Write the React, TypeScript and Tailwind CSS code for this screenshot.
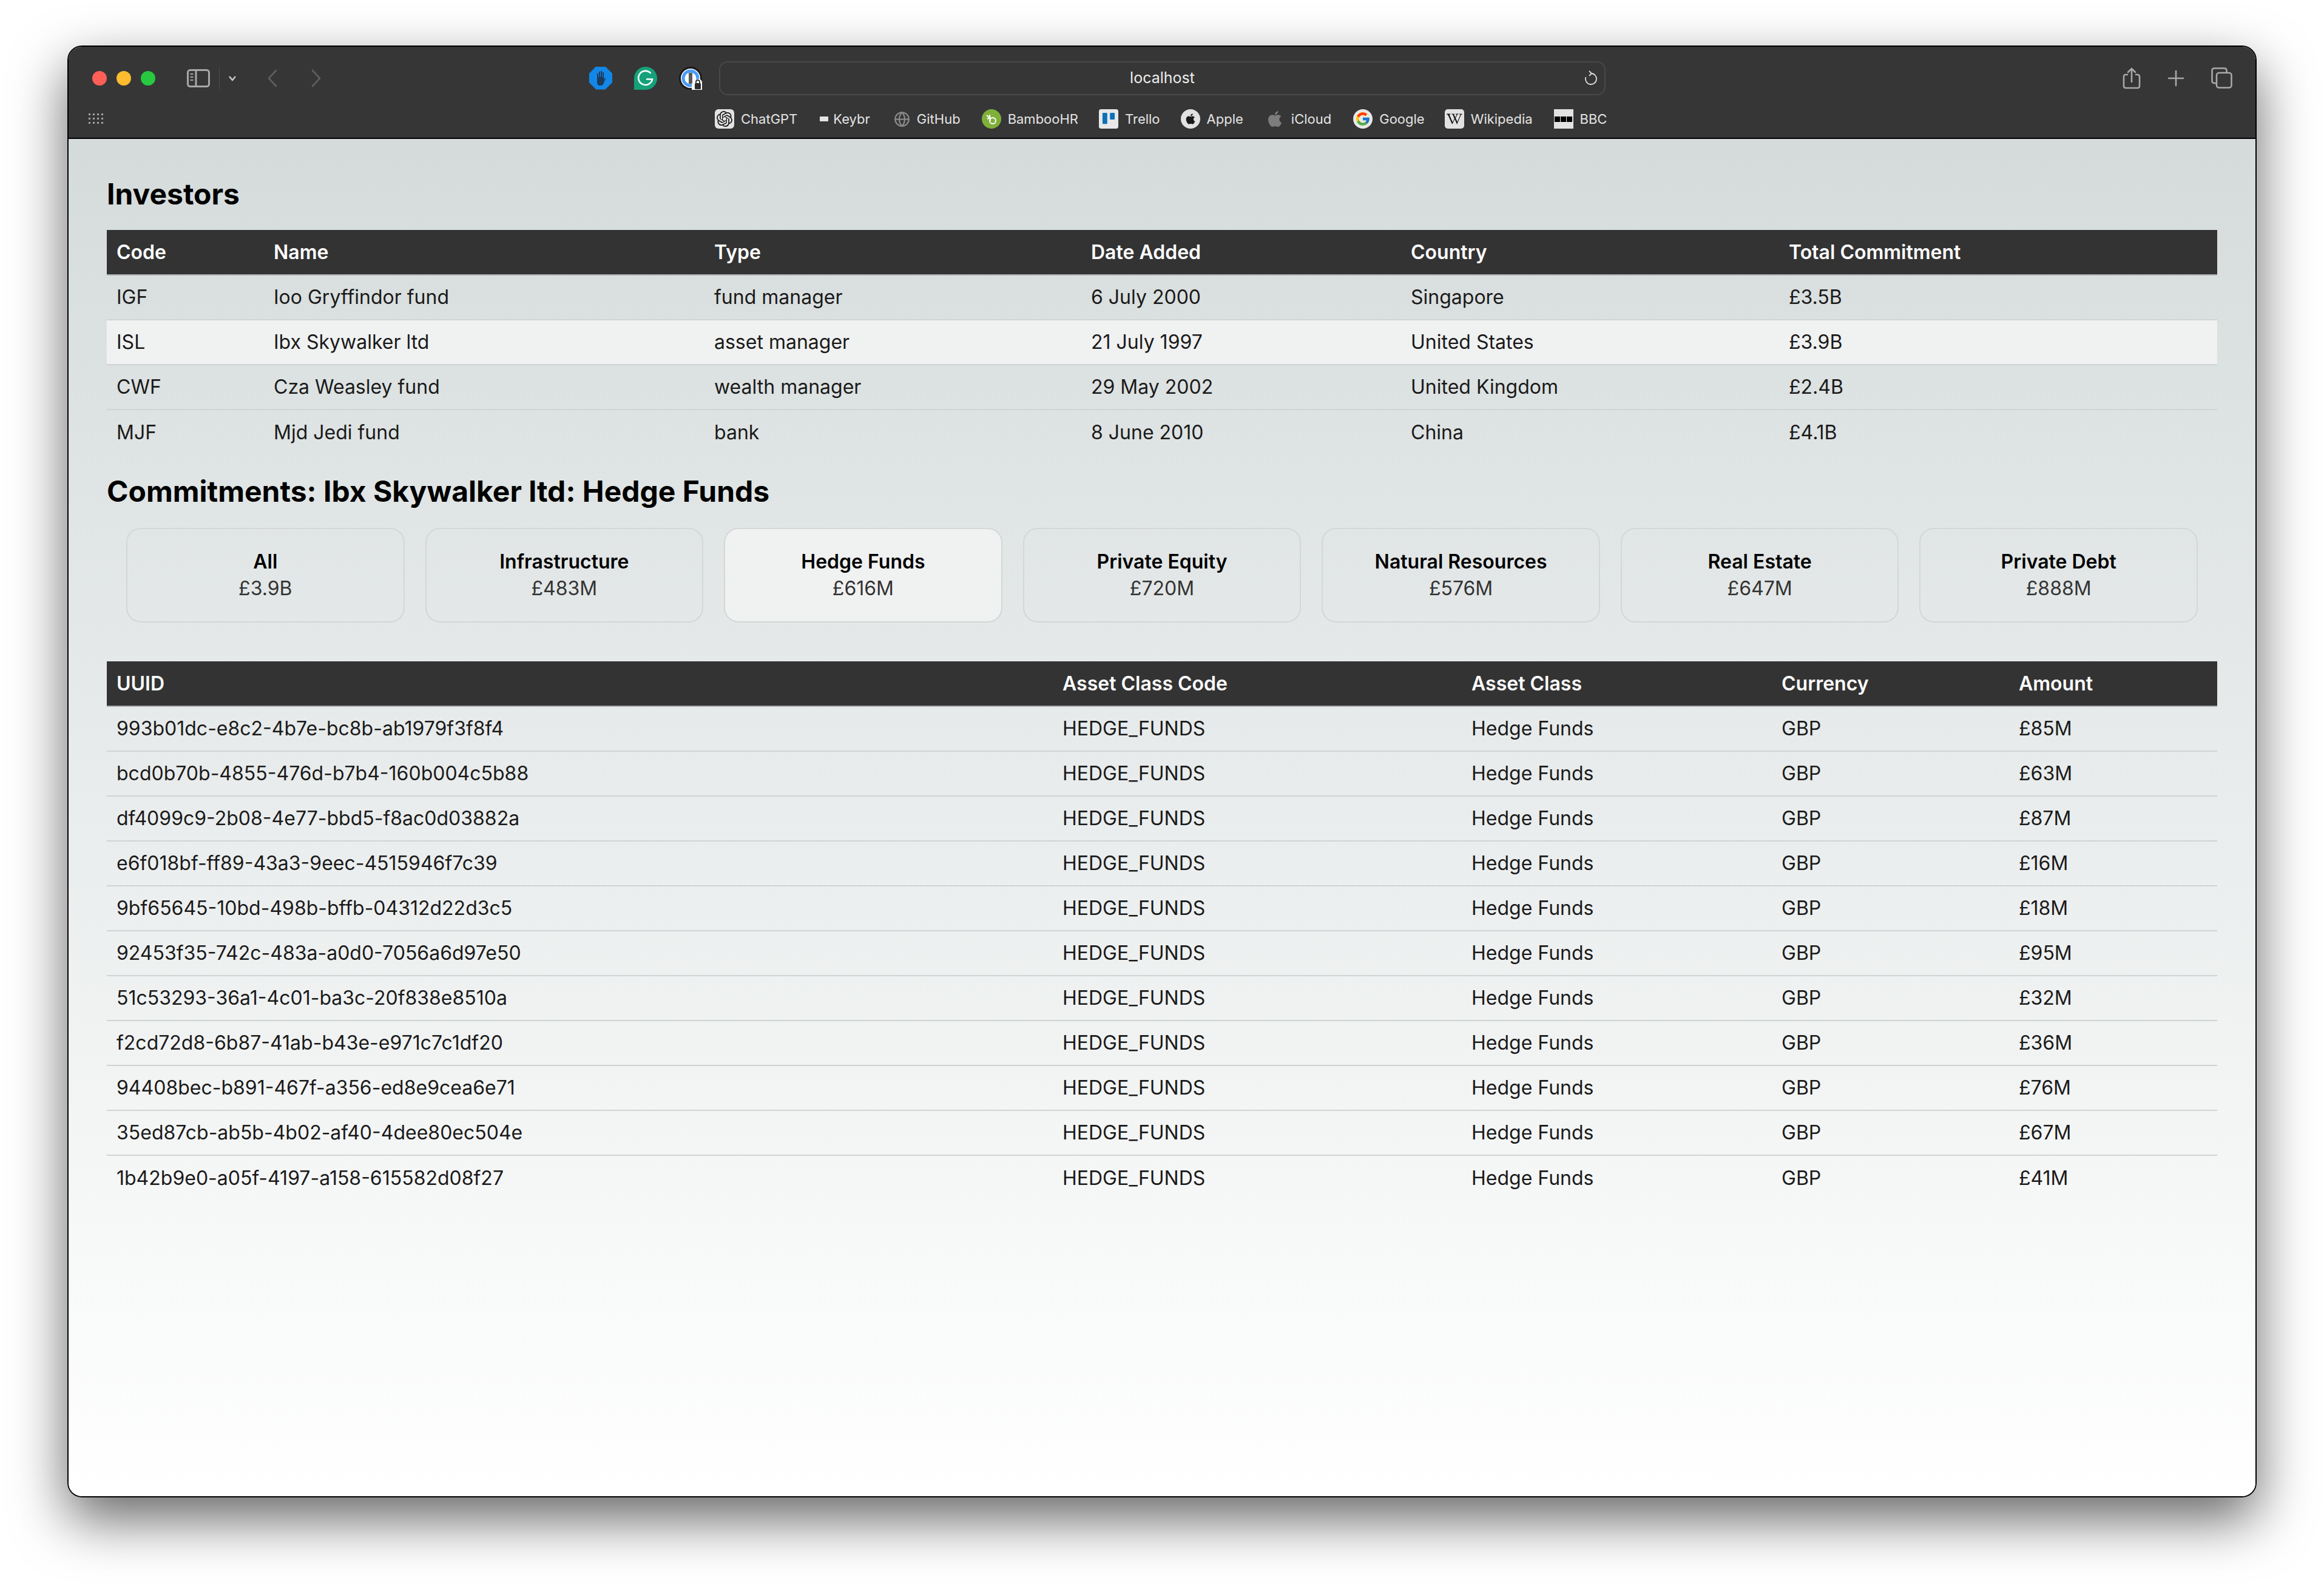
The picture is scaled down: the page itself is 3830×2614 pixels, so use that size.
import React from 'react'
import { FaApple, FaWikipediaW } from 'react-icons/fa'
import { FcGoogle } from 'react-icons/fc'
import { SiOpenai, SiTrello } from 'react-icons/si'
import { LuGlobe } from 'react-icons/lu'

const investors = [
  ['IGF', 'Ioo Gryffindor fund', 'fund manager', '6 July 2000', 'Singapore', '£3.5B'],
  ['ISL', 'Ibx Skywalker ltd', 'asset manager', '21 July 1997', 'United States', '£3.9B'],
  ['CWF', 'Cza Weasley fund', 'wealth manager', '29 May 2002', 'United Kingdom', '£2.4B'],
  ['MJF', 'Mjd Jedi fund', 'bank', '8 June 2010', 'China', '£4.1B'],
]

const tabs = [
  ['All', '£3.9B'],
  ['Infrastructure', '£483M'],
  ['Hedge Funds', '£616M'],
  ['Private Equity', '£720M'],
  ['Natural Resources', '£576M'],
  ['Real Estate', '£647M'],
  ['Private Debt', '£888M'],
]

const commitments = [
  ['993b01dc-e8c2-4b7e-bc8b-ab1979f3f8f4', '£85M'],
  ['bcd0b70b-4855-476d-b7b4-160b004c5b88', '£63M'],
  ['df4099c9-2b08-4e77-bbd5-f8ac0d03882a', '£87M'],
  ['e6f018bf-ff89-43a3-9eec-4515946f7c39', '£16M'],
  ['9bf65645-10bd-498b-bffb-04312d22d3c5', '£18M'],
  ['92453f35-742c-483a-a0d0-7056a6d97e50', '£95M'],
  ['51c53293-36a1-4c01-ba3c-20f838e8510a', '£32M'],
  ['f2cd72d8-6b87-41ab-b43e-e971c7c1df20', '£36M'],
  ['94408bec-b891-467f-a356-ed8e9cea6e71', '£76M'],
  ['35ed87cb-ab5b-4b02-af40-4dee80ec504e', '£67M'],
  ['1b42b9e0-a05f-4197-a158-615582d08f27', '£41M'],
]

const Bookmark = ({ icon, label }: { icon: React.ReactNode; label: string }) => (
  <div className="flex items-center gap-[11px]">
    {icon}
    <span className="text-[22px] leading-[32px] text-[#e4e4e4]">{label}</span>
  </div>
)

const Toolbar = () => (
  <div className="h-[152px] shrink-0 border-b-2 border-black bg-[#363636]">
    <div className="flex h-[84px] items-center pt-[19px]">
      <div className="ml-[39px] flex gap-[16px]">
        <div className="size-[24px] rounded-full bg-[#ff5f57]" />
        <div className="size-[24px] rounded-full bg-[#febc2e]" />
        <div className="size-[24px] rounded-full bg-[#28c840]" />
      </div>
      <svg className="ml-[52px]" width="38" height="30" viewBox="0 0 38 30" fill="none" stroke="#a8a8a8" strokeWidth="3">
        <rect x="1.5" y="1.5" width="35" height="27" rx="4" />
        <path d="M15 2v26" />
        <path d="M5.500 8h5M5.500 13h5M5.500 18h5" strokeWidth="2" />
      </svg>
      <div className="ml-[15px] h-[36px] w-px bg-[#4c4c4c]" />
      <svg className="ml-[14px]" width="14" height="10" viewBox="0 0 14 10" fill="none" stroke="#c4c4c4" strokeWidth="2.6">
        <path d="M2 2l5 6 5-6" />
      </svg>
      <svg className="ml-[50px]" width="18" height="30" viewBox="0 0 18 30" fill="none" stroke="#5f5f5f" strokeWidth="2.6" strokeLinecap="round">
        <path d="M15 2L3 15l12 13" />
      </svg>
      <svg className="ml-[54px]" width="18" height="30" viewBox="0 0 18 30" fill="none" stroke="#5f5f5f" strokeWidth="2.6" strokeLinecap="round">
        <path d="M3 2l12 13L3 28" />
      </svg>

      {/* extensions */}
      <div className="ml-[441px] flex size-[38px] items-center justify-center bg-[#1287e8] [clip-path:polygon(30%_0,70%_0,100%_30%,100%_70%,70%_100%,30%_100%,0_70%,0_30%)]">
        <svg width="20" height="28" viewBox="0 0 20 28" fill="#1d3a5c">
          <path d="M4 13V6h2v6h1V3h2v9h1V2h2v10h1V4h2v12l2-3 1 1-3 8c-1 3-3 4-6 4s-5-2-5-5z" />
        </svg>
      </div>
      <div className="ml-[36px]">
        <svg className="block" width="38" height="38" viewBox="0 0 38 38">
          <path d="M19 0a19 19 0 0 1 0 38H0V19A19 19 0 0 1 19 0z" fill="#15a27a" />
          <path d="M27.500 11a11.500 11.500 0 1 0 2.500 9.500H20" fill="none" stroke="#fff" strokeWidth="2.6" />
        </svg>
      </div>
      <div className="ml-[36px]">
        <svg className="block" width="38" height="38" viewBox="0 0 38 38">
          <circle cx="19" cy="19" r="19" fill="#1a1a1a" />
          <circle cx="19" cy="19" r="16" fill="#fff" />
          <circle cx="19" cy="19" r="12" fill="none" stroke="#4a9bf5" strokeWidth="5" />
          <rect x="16" y="10" width="6" height="18" fill="#5a5a5a" />
          <path d="M21 38v-8a4 4 0 0 1 4-4h1a5 5 0 0 1 12 0v12z" fill="#fff" />
          <rect x="26" y="27" width="10" height="10" rx="1.500" fill="#2c2c2c" />
          <path d="M28 27v-2a3 3 0 0 1 6 0v2" fill="none" stroke="#2c2c2c" strokeWidth="1.8" />
        </svg>
      </div>

      <div className="relative ml-[28px] flex h-[56px] w-[1461px] items-center justify-center rounded-[14px] border-2 border-[#484848]">
        <span className="text-[25px] text-[#ececec]">localhost</span>
        <svg className="absolute right-[12px]" width="22" height="26" viewBox="0 0 22 26" fill="none" stroke="#dcdcdc" strokeWidth="1.8">
          <path d="M12 5a9 9 0 1 1-8.500 6" />
          <path d="M9 1l4 4-4 4" />
        </svg>
      </div>

      <svg className="ml-[852px]" width="30" height="36" viewBox="0 0 30 36" fill="none" stroke="#a9a9a9" strokeWidth="2.6" strokeLinecap="round">
        <path d="M8 12H5a3 3 0 0 0-3 3v16a3 3 0 0 0 3 3h20a3 3 0 0 0 3-3V15a3 3 0 0 0-3-3h-3" />
        <path d="M15 24V2M9 8l6-6 6 6" />
      </svg>
      <svg className="ml-[44px]" width="28" height="28" viewBox="0 0 28 28" stroke="#a9a9a9" strokeWidth="2.6" strokeLinecap="round">
        <path d="M14 2v24M2 14h24" />
      </svg>
      <svg className="ml-[44px]" width="35" height="35" viewBox="0 0 35 35" fill="none" stroke="#a9a9a9" strokeWidth="2.6">
        <path d="M8 26H5a3.500 3.500 0 0 1-3.500-3.500V5A3.500 3.500 0 0 1 5 1.500h17A3.500 3.500 0 0 1 25.500 5v3" />
        <rect x="9" y="9" width="24.500" height="24.500" rx="4" />
      </svg>
    </div>
    <div className="flex h-[66px] items-center pt-[4px]">
      <svg className="ml-[33px]" width="24" height="18" viewBox="0 0 24 18" fill="#a4a4a4">
        <path d="M0 0h3v3H0zM7 0h3v3H7zM14 0h3v3h-3zM21 0h3v3h-3zM0 7h3v3H0zM7 7h3v3H7zM14 7h3v3h-3zM21 7h3v3h-3zM0 14h3v3H0zM7 14h3v3H7zM14 14h3v3h-3zM21 14h3v3h-3z" />
      </svg>
      <div className="ml-[1008px] flex items-center">
        <Bookmark
          label="ChatGPT"
          icon={<div className="flex size-[32px] items-center justify-center rounded-[6px] bg-[#e2e2e2]"><SiOpenai className="size-[26px] text-[#1a1a1a]" /></div>}
        />
        <div className="ml-[37px] flex items-center gap-[8px]">
          <div className="h-[8px] w-[14px] rounded-[1px] bg-[#e4e4e4]" />
          <span className="text-[22px] leading-[32px] text-[#e4e4e4]">Keybr</span>
        </div>
        <div className="ml-[39px]">
          <Bookmark label="GitHub" icon={<LuGlobe className="size-[27px] text-[#8a8a8a]" />} />
        </div>
        <div className="ml-[35px]">
          <Bookmark
            label="BambooHR"
            icon={
              <div className="flex size-[32px] items-center justify-center rounded-full bg-[#7fb03a]">
                <svg width="22" height="22" viewBox="0 0 22 22" fill="none" stroke="#fff" strokeWidth="2">
                  <circle cx="13" cy="14" r="5" />
                  <path d="M8 4l1 10M3 5l5 4M4 11l4-2" />
                </svg>
              </div>
            }
          />
        </div>
        <div className="ml-[34px]">
          <Bookmark
            label="Trello"
            icon={<div className="flex size-[32px] items-center justify-center rounded-[3px] bg-[#0c72b8]"><SiTrello className="size-[32px] text-[#e8e8e8]" /></div>}
          />
        </div>
        <div className="ml-[34px]">
          <Bookmark
            label="Apple"
            icon={<div className="flex size-[32px] items-center justify-center rounded-full bg-[#e2e2e2]"><FaApple className="size-[20px] text-[#1a1a1a]" /></div>}
          />
        </div>
        <div className="ml-[37px] flex items-center gap-[12px]">
          <FaApple className="size-[30px] text-[#7c7c7c]" />
          <span className="text-[22px] leading-[32px] text-[#e4e4e4]">iCloud</span>
        </div>
        <div className="ml-[36px]">
          <Bookmark
            label="Google"
            icon={<div className="flex size-[32px] items-center justify-center rounded-full bg-[#e8e8e8]"><FcGoogle className="size-[26px]" /></div>}
          />
        </div>
        <div className="ml-[33px]">
          <Bookmark
            label="Wikipedia"
            icon={<div className="flex size-[32px] items-center justify-center rounded-[5px] bg-[#e2e2e2]"><FaWikipediaW className="size-[26px] text-[#111]" /></div>}
          />
        </div>
        <div className="ml-[35px]">
          <Bookmark
            label="BBC"
            icon={
              <div className="flex size-[32px] items-center justify-center gap-[1px] bg-[#e2e2e2]">
                <div className="size-[9px] bg-black" />
                <div className="size-[9px] bg-black" />
                <div className="size-[9px] bg-black" />
              </div>
            }
          />
        </div>
      </div>
    </div>
  </div>
)

const headCell = 'px-[16px] text-left font-semibold text-white'

const App = () => {
  return (
    <div className="h-[2614px] w-[3830px] overflow-hidden bg-white pl-[111px] pt-[75px] [font-family:Inter,sans-serif]">
      <div className="flex h-[2393px] w-[3608px] flex-col overflow-hidden rounded-[24px] border-2 border-black shadow-[0_36px_90px_rgba(0,0,0,0.6)]">
        <Toolbar />
        <div className="flex-1 bg-gradient-to-b from-[#d5dbdb] to-white px-[63px] text-[32px] text-[#1a1a1a]">
          <h1 className="mt-[57px] h-[68px] text-[48px] font-bold leading-[68px] text-black">Investors</h1>
          <table className="mt-[25px] w-full table-fixed border-collapse">
            <colgroup>
              <col className="w-[259px]" />
              <col className="w-[726px]" />
              <col className="w-[621px]" />
              <col className="w-[527px]" />
              <col className="w-[623px]" />
              <col />
            </colgroup>
            <thead>
              <tr className="h-[74px] border-b-2 border-[#a9adae] bg-[#333333]">
                {['Code', 'Name', 'Type', 'Date Added', 'Country', 'Total Commitment'].map((h) => (
                  <th key={h} className={headCell}>{h}</th>
                ))}
              </tr>
            </thead>
            <tbody>
              {investors.map((row, i) => (
                <tr key={row[0]} className={`h-[74px] ${i < 3 ? 'border-b-2 border-[#d0d4d5]' : ''} ${i === 1 ? 'bg-[#f0f1f1]' : ''}`}>
                  {row.map((c, j) => (
                    <td key={j} className="px-[16px]">{c}</td>
                  ))}
                </tr>
              ))}
            </tbody>
          </table>

          <h2 className="mt-[27px] h-[68px] text-[48px] font-bold leading-[68px] text-black">Commitments: Ibx Skywalker ltd: Hedge Funds</h2>
          <div className="mt-[26px] grid h-[156px] grid-cols-7 gap-[34px] px-[32px]">
            {tabs.map(([name, amount]) => (
              <div
                key={name}
                className={`flex flex-col items-center rounded-[24px] border-2 border-[#d3d7d8] pt-[32px] ${name === 'Hedge Funds' ? 'bg-[#f0f1f1]' : ''}`}
              >
                <div className="font-semibold leading-[44px] text-black">{name}</div>
                <div className="leading-[44px] text-[#333333]">{amount}</div>
              </div>
            ))}
          </div>

          <table className="mt-[64px] w-full table-fixed border-collapse">
            <colgroup>
              <col className="w-[1559px]" />
              <col className="w-[674px]" />
              <col className="w-[511px]" />
              <col className="w-[391px]" />
              <col />
            </colgroup>
            <thead>
              <tr className="h-[74px] border-b-2 border-[#a9adae] bg-[#333333]">
                {['UUID', 'Asset Class Code', 'Asset Class', 'Currency', 'Amount'].map((h) => (
                  <th key={h} className={headCell}>{h}</th>
                ))}
              </tr>
            </thead>
            <tbody>
              {commitments.map(([uuid, amount], i) => (
                <tr key={uuid} className={`h-[74px] ${i < commitments.length - 1 ? 'border-b-2 border-[#d0d4d5]' : ''}`}>
                  <td className="px-[16px]">{uuid}</td>
                  <td className="px-[16px]">HEDGE_FUNDS</td>
                  <td className="px-[16px]">Hedge Funds</td>
                  <td className="px-[16px]">GBP</td>
                  <td className="px-[16px]">{amount}</td>
                </tr>
              ))}
            </tbody>
          </table>
        </div>
      </div>
    </div>
  )
}

export default App
